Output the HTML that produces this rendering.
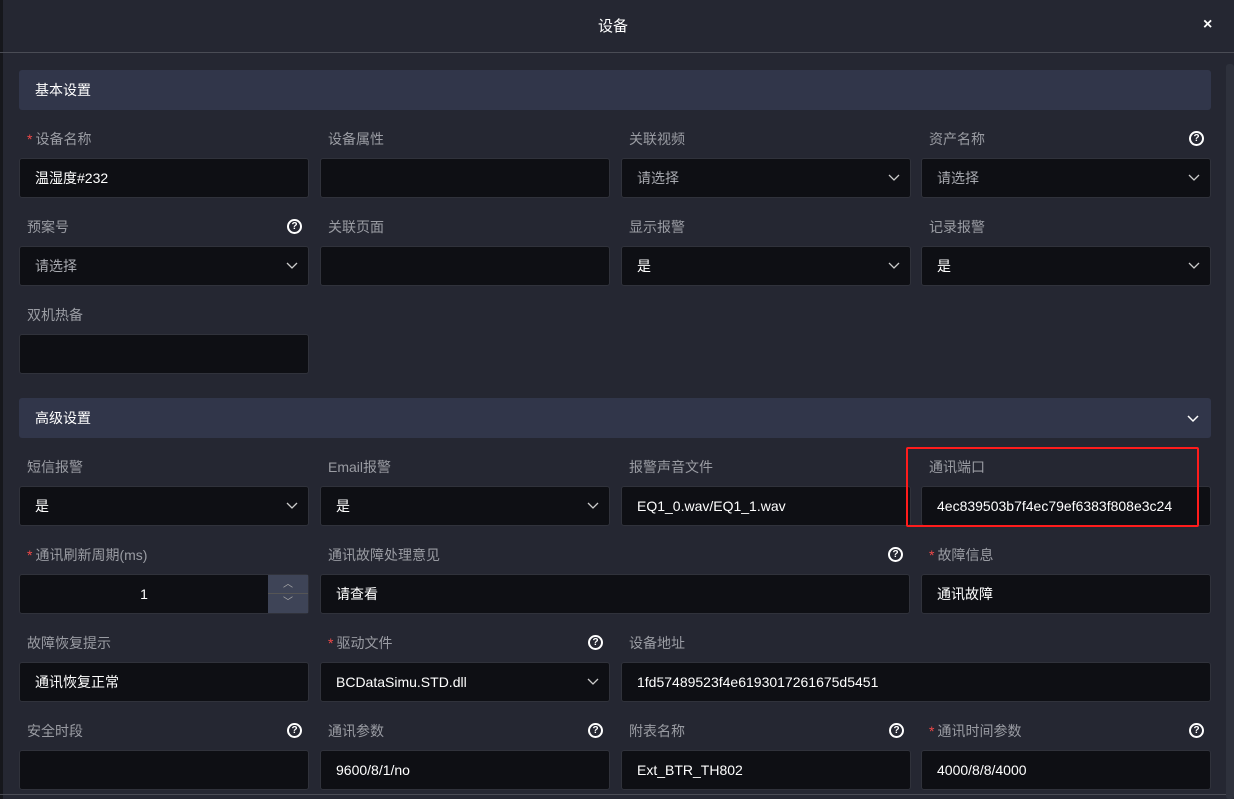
<!DOCTYPE html>
<html><head><meta charset="utf-8"><style>
*{margin:0;padding:0;box-sizing:border-box}
body{width:1234px;height:799px;overflow:hidden;background:#252732;font-family:"Liberation Sans","Noto Sans CJK SC",sans-serif;font-size:14px;position:relative;color:#fff}
.a{position:absolute}
.strip{left:0;top:0;width:3px;height:799px;background:#16171c}
.title{left:0;top:0;width:1226px;height:53px;text-align:center;line-height:54px;font-size:15px}
.hline{left:0;top:52px;width:1234px;height:1px;background:#4a4c55}
.close{left:1203px;top:16px;font-size:16px;font-weight:bold}
.sec{left:19px;width:1192px;height:40px;background:#31364a;border-radius:3px;padding-left:16px;line-height:40px;font-size:14px}
.lbl{color:#9a9ca3;font-size:14px}
.lbl b{color:#f04848;font-weight:normal;margin-right:3px}
.in{height:40px;width:290px;background:#0e0f14;border:1px solid #30323b;border-radius:3px;padding-left:15px;line-height:38px;font-size:14px;color:#fff}
.ph{color:#a8aab0}
.chev{position:absolute;right:10px;top:12px;width:12px;height:12px}
.q{width:15px;height:15px;border:2px solid #fff;border-radius:50%;font-size:10px;font-weight:bold;text-align:center;line-height:11px;color:#fff}
.scroll{left:1226px;top:64px;width:8px;height:735px;background:#2e313c;border-radius:3px}
.red{left:906px;top:447px;width:293px;height:80px;border:2.5px solid #ff1c1c;border-radius:2px}
</style></head><body>
<div class="a strip"></div>
<div class="a title">设备</div>
<div class="a hline"></div>
<div class="a close">×</div>
<div class="a scroll"></div>
<div class="a sec" style="top:70px">基本设置</div>
<div class="a sec" style="top:398px">高级设置<svg class="chev" style="right:12px;top:14px" viewBox="0 0 12 12"><path d="M1 4l5 5 5-5" stroke="#fff" stroke-width="1.5" fill="none"/></svg></div>
<div class="a" style="left:0;top:794px;width:1226px;height:1px;background:#4a4c55"></div>
<div id="f"></div>
<script>
const C=[19,320,621,921];
const rows=[
[138,[["设备名称",1,"温湿度#232",0,0],["设备属性",0,"",0,0],["关联视频",0,"请选择",1,0,1],["资产名称",0,"请选择",1,1,1]]],
[226,[["预案号",0,"请选择",1,1,1],["关联页面",0,"",0,0],["显示报警",0,"是",1,0],["记录报警",0,"是",1,0]]],
[314,[["双机热备",0,"",0,0]]],
[466,[["短信报警",0,"是",1,0],["Email报警",0,"是",1,0],["报警声音文件",0,"EQ1_0.wav/EQ1_1.wav",0,0],["通讯端口",0,"4ec839503b7f4ec79ef6383f808e3c24",0,0]]],
[554,[["通讯刷新周期(ms)",1,"NUM",0,0],null,["故障信息",1,"通讯故障",0,0]]],
[642,[["故障恢复提示",0,"通讯恢复正常",0,0],["驱动文件",1,"BCDataSimu.STD.dll",1,1],["设备地址",0,"1fd57489523f4e6193017261675d5451",0,0]]],
[730,[["安全时段",0,"",0,1],["通讯参数",0,"9600/8/1/no",0,1],["附表名称",0,"Ext_BTR_TH802",0,1],["通讯时间参数",1,"4000/8/8/4000",0,1]]]];
let h='';
const chev='<svg class="chev" viewBox="0 0 12 12"><path d="M1 4l5 5 5-5" stroke="#ccc" stroke-width="1.3" fill="none"/></svg>';
function cell(x,y,c,w){
 const [l,req,v,sel,q,ph]=c;
 let s=`<div class="a lbl" style="left:${x+8}px;top:${y-8}px;line-height:18px">${req?'<b>*</b>':''}${l}</div>`;
 if(q)s+=`<div class="a q" style="left:${x+w-22}px;top:${y-7}px">?</div>`;
 if(v==="NUM"){
  s+=`<div class="a in" style="left:${x}px;top:${y+20}px;width:${w}px;text-align:center;padding:0 40px 0 0">1<div class="a" style="right:0;top:0;width:40px;height:38px;background:#3e4457"><div style="height:19px;border-bottom:1px solid #555;color:#aaa;font-size:10px;line-height:19px">︿</div><div style="color:#aaa;font-size:10px;line-height:18px">﹀</div></div></div>`;
 } else s+=`<div class="a in${ph?' ph':''}" style="left:${x}px;top:${y+20}px;width:${w}px">${v}${sel?chev:''}</div>`;
 return s;
}
rows.forEach(([y,cells])=>{
 if(y===554){
  h+=cell(19,y,cells[0],290);
  h+=cell(320,y,["通讯故障处理意见",0,"请查看",0,1],590);
  h+=cell(921,y,cells[2],290);
 } else if(y===642){
  h+=cell(19,y,cells[0],290);h+=cell(320,y,cells[1],290);
  h+=cell(621,y,cells[2],590);
 } else cells.forEach((c,i)=>{h+=cell(C[i],y,c,290)});
});
document.getElementById('f').innerHTML=h;
</script>
<div class="a red"></div>
</body></html>
